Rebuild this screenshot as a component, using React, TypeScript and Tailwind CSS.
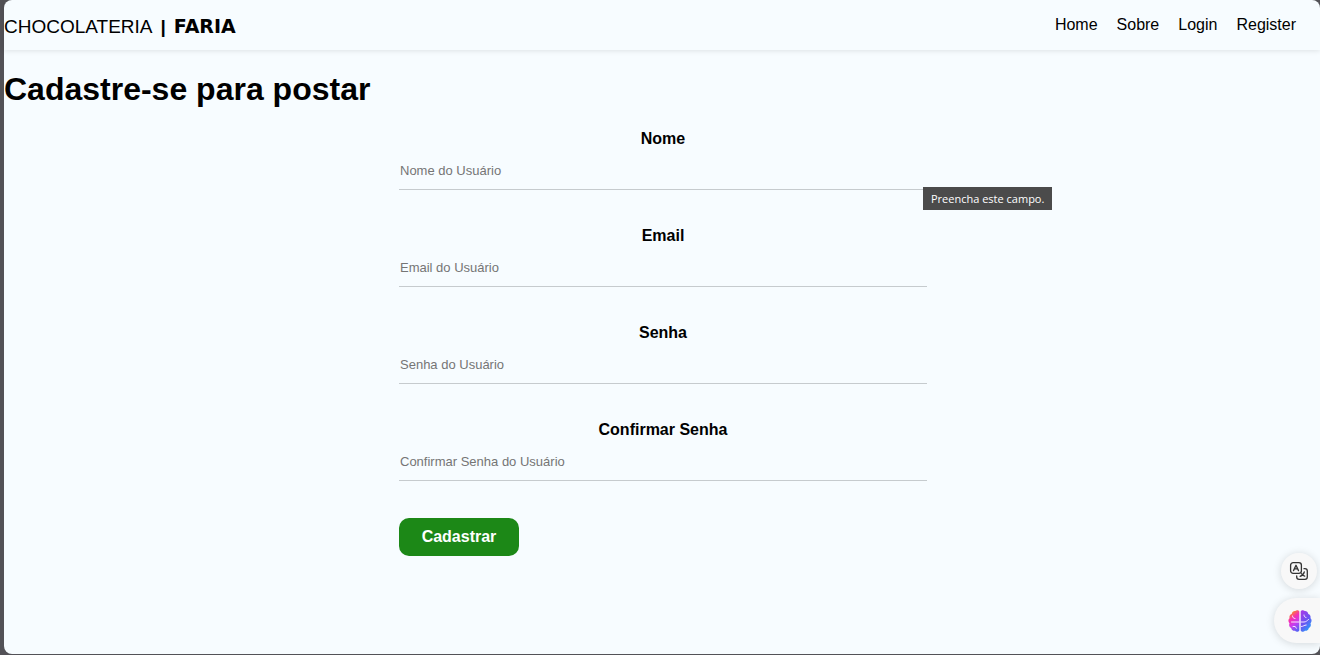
const links = ["Home", "Sobre", "Login", "Register"];

const fields = [
  { id: "name", type: "text", label: "Nome", placeholder: "Nome do Usuário" },
  { id: "email", type: "email", label: "Email", placeholder: "Email do Usuário" },
  { id: "password", type: "password", label: "Senha", placeholder: "Senha do Usuário" },
  {
    id: "confirm",
    type: "password",
    label: "Confirmar Senha",
    placeholder: "Confirmar Senha do Usuário",
  },
];

function Header() {
  return (
    <header className="flex h-[50px] items-center justify-between pr-6 shadow-[0_1px_5px_rgba(0,0,0,0.1)]">
      <a href="#home" className="flex items-baseline gap-2 pt-0.5 text-[19px] leading-6">
        <span>CHOCOLATERIA</span>
        <span className="font-bold">|</span>
        <span className="font-['DejaVu_Sans',sans-serif] font-bold">FARIA</span>
      </a>
      <nav className="flex gap-[19px]">
        {links.map((link) => (
          <a key={link} href={"#" + link.toLowerCase()} className="text-base leading-5">
            {link}
          </a>
        ))}
      </nav>
    </header>
  );
}

function TranslateIcon() {
  return (
    <svg viewBox="0 0 20 20" className="size-5" fill="none" stroke="#333" strokeWidth="1.3" strokeLinecap="round" strokeLinejoin="round" aria-hidden="true">
      <rect x="1.600" y="1.600" width="10.800" height="10.800" rx="2.600" />
      <path d="M4.500 9.600 7 4.300l2.500 5.300M5.400 7.900h3.200" />
      <path d="M15 7.700h.9a2.400 2.400 0 0 1 2.400 2.400v5.800a2.400 2.400 0 0 1-2.400 2.400h-5.800a2.400 2.400 0 0 1-2.400-2.400V15" />
      <path d="M15.300 10.800c-.5 2.200-1.900 3.700-4.200 4.500M12.700 12.700c.6 1.200 1.500 2 3 2.500" />
    </svg>
  );
}

function BrainIcon() {
  return (
    <svg viewBox="0 0 24 24" className="size-6" aria-hidden="true">
      <defs>
        <linearGradient id="brain-left" x1="0.3" y1="0" x2="0.7" y2="1">
          <stop offset="0.05" stopColor="#ff8a1f" />
          <stop offset="0.35" stopColor="#f52fb4" />
          <stop offset="0.65" stopColor="#c63cf0" />
          <stop offset="1" stopColor="#5a62f5" />
        </linearGradient>
        <linearGradient id="brain-right" x1="0.2" y1="0" x2="0.8" y2="1">
          <stop offset="0" stopColor="#a33be8" />
          <stop offset="0.5" stopColor="#6a55f2" />
          <stop offset="1" stopColor="#1fa8fa" />
        </linearGradient>
      </defs>
      <path fill="url(#brain-left)" d="M11.300 2.500v19c-.7 1.400-3 1.700-4.300.3-2 .2-3.600-1.100-3.800-2.900C1.300 18 .6 16 1.500 14.400.1 12.900 0 10.500 1.500 9.300 1 7.300 2 5.600 3.700 5.100 4 3 5.600 1.900 7.300 2.100c1.300-1.200 3.400-.9 4 .4Z" />
      <path fill="url(#brain-right)" d="M12.700 2.500v19c.7 1.400 3 1.700 4.300.3 2 .2 3.600-1.100 3.800-2.900 1.900-.9 2.600-2.900 1.700-4.500 1.400-1.500 1.500-3.900 0-5.100.5-2-.5-3.700-2.200-4.200-.3-2.100-1.900-3.200-3.600-3-1.300-1.200-3.400-.9-4 .4Z" />
      <g fill="none" stroke="#f8e8ff" strokeWidth="1" strokeLinecap="round">
        <path d="M11 13H3.500M7 9.500C5.500 9.500 4.500 8.500 4.500 7M5 17.500c1.500-.5 3 .2 3.500 1.700" />
        <path d="M13 13h3c2 0 3-1.300 4.500-2.500M16 6c0 1.500.7 2.200 2 2.500M13.500 17.500c2 0 2.500-1.500 4.700-1.500" />
      </g>
    </svg>
  );
}

export default function App() {
  return (
    <div className="flex min-h-screen bg-[#535257] pb-px pl-1 font-['Liberation_Sans',Arial,sans-serif] text-black">
      <div className="flex-1 rounded-lg bg-[#f7fcff]">
        <Header />
        <main>
          <h1 className="pt-5 text-[32px] leading-[38px] font-bold">Cadastre-se para postar</h1>
          <div className="flex justify-center pt-[17px] pl-0.5">
            <form className="w-full max-w-[528px]" onSubmit={(e) => e.preventDefault()}>
              {fields.map((field) => (
                <div key={field.id} className="relative mb-8">
                  <label htmlFor={field.id} className="block pt-0.5 pb-px text-center text-base leading-6 font-bold">
                    {field.label}
                  </label>
                  <input
                    id={field.id}
                    type={field.type}
                    placeholder={field.placeholder}
                    required
                    className="block h-[38px] w-full border-b border-[#c6cbce] bg-transparent pl-px text-[13px] outline-none placeholder:text-[#757575]"
                  />
                  {field.id === "name" && (
                    <div
                      role="tooltip"
                      className="absolute top-[62px] left-[524px] bg-[#4b4b4b] px-2 py-1 font-['Open_Sans',sans-serif] text-[11px] leading-[15px] whitespace-nowrap text-white"
                    >
                      Preencha este campo.
                    </div>
                  )}
                </div>
              ))}
              <button type="submit" className="mt-[5px] h-[38px] w-[120px] rounded-[10px] bg-[#1c8817] text-base font-bold text-white">
                Cadastrar
              </button>
            </form>
          </div>
        </main>
      </div>
      <div className="fixed right-0 bottom-3 flex flex-col items-end gap-[9px]">
        <button
          type="button"
          aria-label="Traduzir"
          className="mr-[3px] flex size-9 items-center justify-center rounded-full bg-[#f8f8f8] shadow-[0_1px_8px_rgba(0,0,0,0.15)]"
        >
          <TranslateIcon />
        </button>
        <button
          type="button"
          aria-label="Assistente"
          className="flex h-[45px] w-[46px] items-center rounded-l-full bg-[#f8f8f8] pl-3.5 shadow-[0_1px_8px_rgba(0,0,0,0.15)]"
        >
          <BrainIcon />
        </button>
      </div>
    </div>
  );
}
